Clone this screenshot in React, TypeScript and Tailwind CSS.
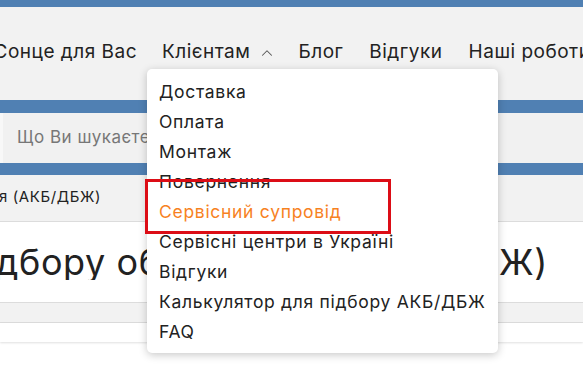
import { ChevronUp } from "lucide-react";

const menu = [
    "Доставка",
    "Оплата",
    "Монтаж",
    "Повернення",
    "Сервісний супровід",
    "Сервісні центри в Україні",
    "Відгуки",
    "Калькулятор для підбору АКБ/ДБЖ",
    "FAQ",
];

export default function App() {
    return (
        <div className="relative h-[366px] w-[583px] overflow-hidden bg-white font-['Inter',sans-serif] tracking-[0.5px] text-[#222]">
            <div className="h-[7px] bg-[#5080b3]" />

            {/* main nav */}
            <div className="flex h-[93px] items-center bg-[#f2f2f2] pb-[2px] text-[19px] whitespace-nowrap">
                <div className="flex w-[137px] shrink-0 justify-end overflow-hidden">
                    <span>Сонце для Вас</span>
                </div>
                <div className="ml-[25px] flex items-center gap-[8px]">
                    <span>Клієнтам</span>
                    <ChevronUp className="h-[18px] w-[18px] text-[#555]" strokeWidth={1.4} />
                </div>
                <span className="ml-[22px]">Блог</span>
                <span className="ml-[26px]">Відгуки</span>
                <span className="ml-[26px]">Наші роботи</span>
            </div>

            <div className="h-[13px] bg-[#5080b3]" />

            {/* search */}
            <div className="flex h-[50px] items-center border-l-[3px] border-[#f8f8f8] bg-[#f1f1f1] pl-[14px] text-[17px] text-[#777]">
                Що Ви шукаєте?
            </div>

            <div className="h-[12px] bg-[#5080b3]" />

            {/* breadcrumbs */}
            <div className="flex h-[47px] items-center border-b border-[#dcdcdc] bg-[#f2f2f2] pb-[2px] text-[15px] tracking-[0.6px] whitespace-nowrap">
                <div className="flex w-[101px] justify-end overflow-hidden">
                    <span>Головна / Калькулятор / Енергія (АКБ/ДБЖ)</span>
                </div>
            </div>

            {/* title */}
            <div className="flex h-[80px] items-center pb-[1px] whitespace-nowrap">
                <div className="flex w-[548px] justify-end overflow-hidden">
                    <h1 className="text-[36px] leading-none tracking-[0.6px]">
                        Калькулятор для підбору обладнання (АКБ/ДБЖ)
                    </h1>
                </div>
            </div>

            <div className="h-[21px] border-y border-[#dcdcdc] bg-[#f2f2f2]" />
            <div className="h-[19px] bg-white shadow-[0_1px_2px_rgba(0,0,0,0.12)]" />

            {/* dropdown */}
            <div className="absolute left-[147px] top-[69px] w-[351px] rounded-[5px] bg-white pb-[6px] pt-[8px] shadow-[0_2px_8px_rgba(0,0,0,0.22)]">
                {menu.map((item, i) => (
                    <div
                        key={item}
                        className={
                            "flex h-[30px] items-center pl-[12px] text-[17.5px] tracking-[0.7px] whitespace-nowrap " +
                            (i === 4 ? "text-[#f7821f]" : "text-[#222]")
                        }
                    >
                        {item}
                    </div>
                ))}
            </div>

            {/* highlight */}
            <div className="absolute left-[145px] top-[179px] h-[55px] w-[246px] border-[3px] border-[#dc0d16]" />
        </div>
    );
}
